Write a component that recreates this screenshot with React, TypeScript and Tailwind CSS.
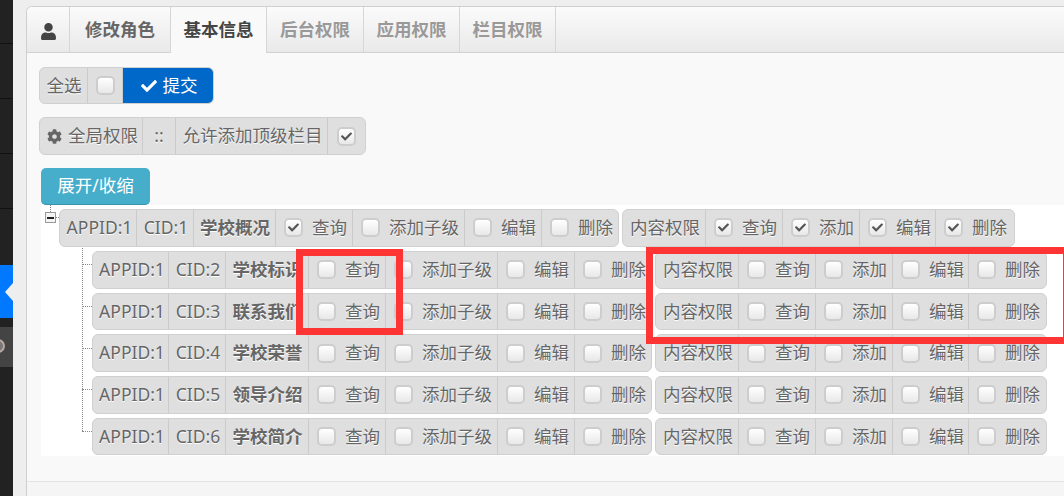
import { FaCheck, FaCog, FaUser } from "react-icons/fa";

const font = "font-['Noto_Sans','Noto_Sans_CJK_SC',sans-serif]";

function Box({ on }: { on?: boolean }) {
  return (
    <span className="flex h-[19px] w-[19px] shrink-0 items-center justify-center rounded-[5px] border-2 border-[#cdcdcd] bg-gradient-to-b from-[#ffffff] to-[#e8e8e8] text-[#555]">
      {on && <FaCheck size={11} />}
    </span>
  );
}

function Cell({ className, children }: { className: string; children: React.ReactNode }) {
  return (
    <div className={`flex h-full shrink-0 items-center whitespace-nowrap border-r border-[#cbcbcb] last:border-r-0 ${className}`}>
      {children}
    </div>
  );
}

function Check({ className, label, on }: { className: string; label: string; on?: boolean }) {
  return (
    <Cell className={`pl-[8px] ${className}`}>
      <Box on={on} />
      <span className="ml-[9px]">{label}</span>
    </Cell>
  );
}

function Group({ className, children }: { className?: string; children: React.ReactNode }) {
  return (
    <div className={`flex h-full items-center overflow-hidden rounded-[6px] border border-[#d0d0d0] bg-[#dfdfdf] text-[#666] [text-shadow:0_1px_0_#fff] ${className ?? ""}`}>
      {children}
    </div>
  );
}

function Row({ cid, name, root }: { cid: number; name: string; root?: boolean }) {
  const on = !!root;
  return (
    <div className="flex h-[37.5px] gap-[3px]">
      <Group>
        <Cell className={`justify-center pl-[3px] ${root ? "w-[77px]" : "w-[76px]"}`}>APPID:1</Cell>
        <Cell className="w-[57px] justify-center pl-[2px]">CID:{cid}</Cell>
        <Cell className={`justify-center pl-[1px] font-bold ${root ? "w-[82px]" : "w-[83px]"}`}>{name}</Cell>
        <Check className="w-[77px]" label="查询" on={on} />
        <Check className="w-[112px]" label="添加子级" />
        <Check className="w-[77px]" label="编辑" />
        <Check className="w-[76px]" label="删除" />
      </Group>
      <Group>
        <Cell className="w-[83px] justify-center pl-[2px]">内容权限</Cell>
        <Check className="w-[77px]" label="查询" on={on} />
        <Check className="w-[77px]" label="添加" on={on} />
        <Check className="w-[76px]" label="编辑" on={on} />
        <Check className={root ? "w-[78px]" : "w-[77px]"} label="删除" on={on} />
      </Group>
    </div>
  );
}

const children = [
  [2, "学校标识"],
  [3, "联系我们"],
  [4, "学校荣誉"],
  [5, "领导介绍"],
  [6, "学校简介"],
] as const;

function Tab({ className, label }: { className: string; label: string }) {
  return (
    <div className={`flex h-full items-center justify-center border-r border-[#d6d6d6] font-bold ${className}`}>{label}</div>
  );
}

export default function App() {
  return (
    <div className={`flex h-[496px] w-[1064px] overflow-hidden bg-[#eeeeee] text-[17.5px] leading-none ${font}`}>
      <aside className="flex w-[13px] shrink-0 flex-col bg-[#222222]">
        <div className="h-[44px] shrink-0 border-b border-[#111111]" />
        <div className="h-[55px] shrink-0 border-b border-[#111111]" />
        <div className="h-[55px] shrink-0 border-b border-[#111111]" />
        <div className="h-[55px] shrink-0 border-b border-[#111111]" />
        <div className="h-[56px] shrink-0" />
        <div className="relative h-[53px] shrink-0 bg-[#0078ff]">
          <span className="absolute right-0 top-[18px] h-0 w-0 border-y-[9px] border-r-[8px] border-y-transparent border-r-[#eeeeee]" />
        </div>
        <div className="h-[9px] shrink-0" />
        <div className="relative h-[40px] shrink-0 overflow-hidden bg-[#444444]">
          <span className="absolute -left-[9px] top-[12px] h-[14px] w-[14px] rounded-full border-2 border-[#b8a8a0] bg-[#777777]" />
        </div>
      </aside>

      <div className="ml-[13px] mt-[6px] flex min-w-0 flex-1 flex-col overflow-hidden rounded-tl-[6px] border-l border-t border-[#cfcfcf] bg-[#f9f9f9]">
        <div className="relative flex h-[46px] shrink-0 border-b border-[#d2d2d2] bg-gradient-to-b from-[#fbfbfb] to-[#e9e9e9]">
          <div className="flex h-full w-[43px] items-center justify-center border-r border-[#d6d6d6] pt-[3px] text-[#444]">
            <FaUser size={17} />
          </div>
          <Tab className="w-[101px] text-[#666]" label="修改角色" />
          <div className="relative z-10 -mt-[3px] flex h-[49px] w-[96px] items-center justify-center border-r border-t-[2px] border-[#d6d6d6] border-t-[#1e90ff] bg-[#f9f9f9] pt-[1px] font-bold text-[#444]">
            基本信息
          </div>
          <Tab className="w-[97px] text-[#999]" label="后台权限" />
          <Tab className="w-[96px] text-[#999]" label="应用权限" />
          <Tab className="w-[96px] text-[#999]" label="栏目权限" />
        </div>

        <div className="flex flex-col pl-[12px] pt-[14px]">
          <div className="flex h-[37px]">
            <div className="flex h-full overflow-hidden rounded-[6px] border border-[#d0d0d0] bg-[#dfdfdf] text-[#666] [text-shadow:0_1px_0_#fff]">
              <Cell className="w-[48px] justify-center pl-[1px]">全选</Cell>
              <Cell className="w-[35px] justify-center"><Box /></Cell>
              <div className="-my-px flex w-[90px] items-center justify-center gap-[6px] bg-[#0068c8] pl-[2px] text-white [text-shadow:none]">
                <FaCheck size={16} />
                提交
              </div>
            </div>
          </div>

          <div className="mt-[13px] flex h-[38px]">
            <Group>
              <Cell className="w-[103px] justify-center gap-[6px] pl-[3px]"><FaCog size={15} />全局权限</Cell>
              <Cell className="w-[33px] justify-center">::</Cell>
              <Cell className="w-[152px] justify-center pl-[2px]">允许添加顶级栏目</Cell>
              <Cell className="w-[37px] justify-center"><Box on /></Cell>
            </Group>
          </div>

          <button className="ml-[2px] mt-[13px] flex h-[37px] w-[109px] items-center justify-center rounded-[5px] border-b border-[#3a90ad] bg-[#46adcb] text-white">
            展开/收缩
          </button>
        </div>

        <div className="relative ml-[14px] h-[251px] shrink-0 bg-white pl-[18px] pt-[4px]">
          <span className="absolute left-[9px] top-0 h-[7px] border-l border-dotted border-[#888]" />
          <span className="absolute left-[4px] top-[7px] flex h-[11px] w-[11px] items-center justify-center border border-[#999] bg-[#f4f4f4]">
            <span className="h-[2px] w-[7px] bg-[#222]" />
          </span>
          <span className="absolute left-[15px] top-[12px] w-[3px] border-t border-dotted border-[#888]" />
          <span className="absolute left-[41px] top-[43px] h-[183px] border-l border-dotted border-[#888]" />
          <span className="absolute left-[41px] top-[59px] w-[10px] border-t border-dotted border-[#888]" />
          <span className="absolute left-[41px] top-[101px] w-[10px] border-t border-dotted border-[#888]" />
          <span className="absolute left-[41px] top-[143px] w-[10px] border-t border-dotted border-[#888]" />
          <span className="absolute left-[41px] top-[184px] w-[10px] border-t border-dotted border-[#888]" />
          <span className="absolute left-[41px] top-[226px] w-[10px] border-t border-dotted border-[#888]" />

          <Row cid={1} name="学校概况" root />
          <div className="ml-[33px] mt-[4.5px] flex flex-col gap-[4.2px]">
            {children.map(([cid, name]) => (
              <Row key={cid} cid={cid} name={name} />
            ))}
          </div>
        </div>

        <div className="mt-[25px] flex-1 border-t border-[#e4e4e4] bg-[#f5f5f5]" />
      </div>

      <div className="pointer-events-none absolute left-[296px] top-[249px] h-[86px] w-[107px] border-[7px] border-[#ff3535]" />
      <div className="pointer-events-none absolute left-[646px] top-[247px] h-[97px] w-[424px] border-[7px] border-[#ff3535]" />
    </div>
  );
}
